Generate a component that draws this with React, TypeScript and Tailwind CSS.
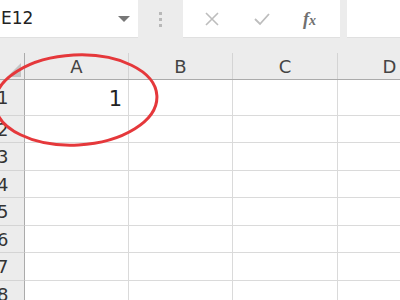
import React from 'react';

const cols = ['A', 'B', 'C', 'D'];
const colWidths = [104, 104, 105, 104];
const rowHeights = [36, 27, 28, 27, 28, 27, 28, 27];

const font = { fontFamily: '"DejaVu Sans", "Noto Sans", sans-serif' };

export default function App() {
    return (
        <div className="relative w-[400px] h-[300px] overflow-hidden bg-[#ececec] text-[#333]" style={font}>
            {/* Formula bar */}
            <div className="flex h-[38px]">
                <div className="w-[138px] shrink-0 bg-white flex items-center justify-between pr-[8px] border-b border-[#e0e0e0]">
                    <span className="text-[17px] ml-[1px] text-[#222]">E12</span>
                    <span className="w-0 h-0 border-l-[6px] border-r-[6px] border-t-[6px] border-l-transparent border-r-transparent border-t-[#777]" />
                </div>
                <div className="w-[45px] shrink-0 flex flex-col items-center justify-center gap-[3px]">
                    <span className="w-[3px] h-[3px] bg-[#b8b8b8]" />
                    <span className="w-[3px] h-[3px] bg-[#b8b8b8]" />
                    <span className="w-[3px] h-[3px] bg-[#b8b8b8]" />
                </div>
                <div className="w-[157px] shrink-0 bg-white flex items-center border-b border-[#e0e0e0]">
                    <svg width="16" height="16" viewBox="0 0 16 16" className="ml-[21px]">
                        <path d="M2 2 L14 14 M14 2 L2 14" stroke="#bdbdbd" strokeWidth="1.6" />
                    </svg>
                    <svg width="18" height="16" viewBox="0 0 18 16" className="ml-[33px]">
                        <path d="M2 8 L7 13 L16 3" stroke="#bdbdbd" strokeWidth="1.8" fill="none" />
                    </svg>
                    <span className="ml-[32px] text-[18px] italic font-bold text-[#707070] leading-none" style={{ fontFamily: '"Liberation Serif", serif' }}>
                        f<span className="text-[14px]">x</span>
                    </span>
                </div>
                <div className="w-[7px] shrink-0" />
                <div className="flex-1 bg-white border-b border-[#e0e0e0]" />
            </div>

            <div className="h-[15px]" />

            {/* Column headers */}
            <div className="flex h-[27px] border-b border-[#ababab]">
                <div className="w-[25px] shrink-0 border-r border-[#ababab] flex items-end justify-end pr-[3px] pb-[2px]">
                    <svg width="14" height="14" viewBox="0 0 14 14">
                        <polygon points="14,0 14,14 0,14" fill="#c4c4c4" />
                    </svg>
                </div>
                {cols.map((c, i) => (
                    <div
                        key={c}
                        style={{ width: colWidths[i] }}
                        className="shrink-0 flex items-center justify-center text-[18px] text-[#444] border-r border-[#d4d4d4]"
                    >
                        {c}
                    </div>
                ))}
            </div>

            {/* Rows */}
            {rowHeights.map((h, r) => (
                <div key={r} className="flex bg-white" style={{ height: h }}>
                    <div className="w-[25px] shrink-0 bg-[#ececec] border-r border-b border-r-[#ababab] border-b-[#d4d4d4] flex items-center overflow-hidden">
                        <span className="text-[18px] ml-[-3px] text-[#333]">{r + 1}</span>
                    </div>
                    {cols.map((c, i) => (
                        <div
                            key={c}
                            style={{ width: colWidths[i] }}
                            className="shrink-0 border-r border-b border-[#dadada] flex items-end justify-end pr-[6px] pb-[5px]"
                        >
                            {r === 0 && i === 0 ? <span className="text-[21px] leading-none text-[#222]">1</span> : null}
                        </div>
                    ))}
                </div>
            ))}

            {/* Red circle annotation */}
            <svg className="absolute left-0 top-0 pointer-events-none" width="400" height="300">
                <ellipse cx="76" cy="100" rx="81" ry="45" transform="rotate(-3 76 100)" fill="none" stroke="#e5383b" strokeWidth="3" />
            </svg>
        </div>
    );
}
